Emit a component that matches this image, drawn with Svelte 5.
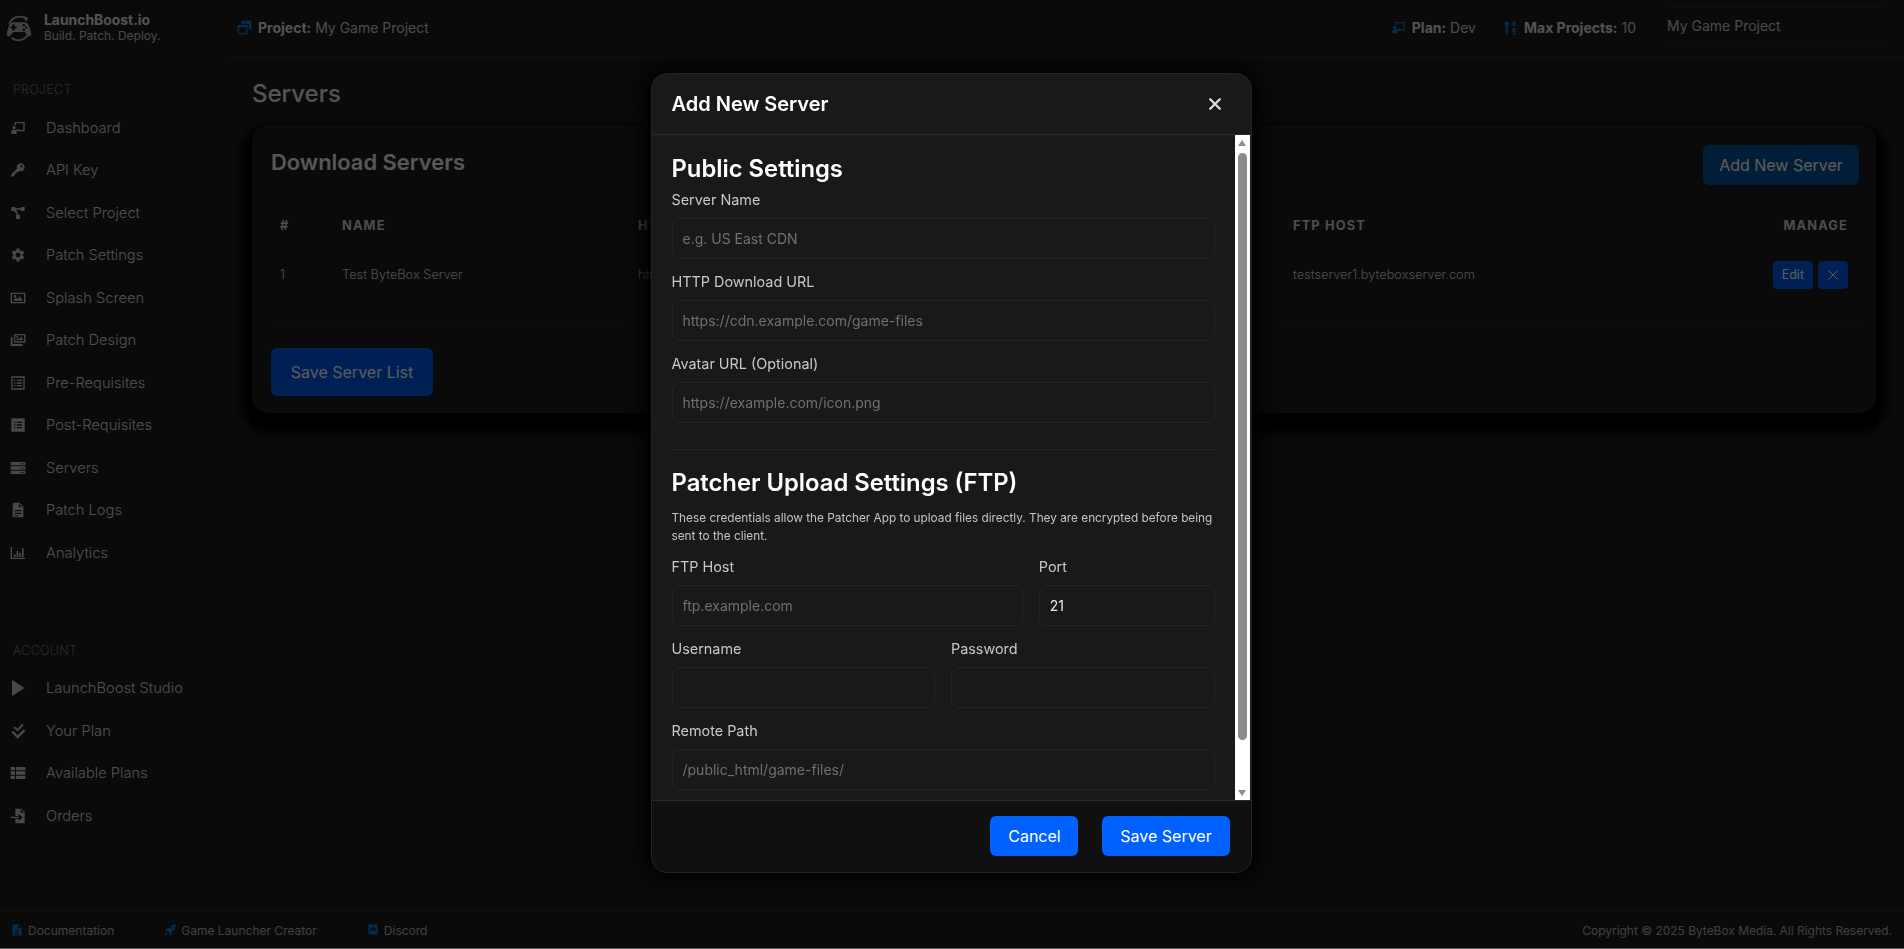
<script>
  const icons = {
    board: 'M7 3h15v14H12v-2h8V5H9v3H7zM6 9a2.6 2.6 0 1 1 0 5.200A2.6 2.6 0 0 1 6 9zM2 21v-3.500C2 16 3.200 15 4.600 15H9l4.500-2 .8 1.700L10 17v4z',
    key: 'M16 2a6 6 0 1 1-2.300 11.500l-1.700 1.700H9.500v2.500H7V20l-2 2H2v-3.500l8.400-8.400A6 6 0 0 1 16 2zm1.500 3a1.600 1.600 0 1 0 0 3.200 1.600 1.600 0 0 0 0-3.200z',
    nodes: 'M2 3h6v2h8V3h6v6h-6V7H9l4 8h2v6H9v-6h1.600L6.600 9H2z',
    gear: 'M19.140 12.940c.04-.3.06-.61.06-.94 0-.32-.02-.64-.07-.94l2.030-1.580a.49.49 0 0 0 .12-.61l-1.920-3.320a.488.488 0 0 0-.59-.22l-2.390.96c-.5-.38-1.030-.7-1.620-.94l-.36-2.540a.484.484 0 0 0-.48-.41h-3.840c-.24 0-.43.17-.47.41l-.36 2.540c-.59.24-1.130.57-1.620.94l-2.390-.96c-.22-.08-.47 0-.59.22L2.740 8.870c-.12.21-.08.47.12.61l2.030 1.580c-.05.3-.09.63-.09.94s.02.64.07.94l-2.030 1.580a.49.49 0 0 0-.12.61l1.920 3.320c.12.22.37.29.59.22l2.390-.96c.5.38 1.030.7 1.620.94l.36 2.540c.05.24.24.41.48.41h3.840c.24 0 .44-.17.47-.41l.36-2.540c.59-.24 1.130-.56 1.620-.94l2.390.96c.22.08.47 0 .59-.22l1.920-3.320c.12-.22.07-.47-.12-.61l-2.010-1.580zM12 15.600c-1.980 0-3.600-1.620-3.600-3.600s1.620-3.600 3.600-3.600 3.600 1.620 3.600 3.600-1.620 3.600-3.600 3.600z',
    image: 'M1 4h22v16H1zm2 2v12h18V6zm2 10l4-5 3 3 3-5 4 7zM7.500 7.500a2 2 0 1 1 0 4 2 2 0 0 1 0-4z',
    images: 'M6 3h17v13H6zm2 2v9h13V5zm1 7.500l3-3.500 2 2 3-4.500 3 6zM10.800 6a1.500 1.500 0 1 1 0 3 1.500 1.500 0 0 1 0-3zM1 8h3v10h15v3H1z',
    listOutline: 'M2 2h20v20H2zm2 2v16h16V4zm2 3h2v2H6zm4 0h8v2h-8zm-4 4h2v2H6zm4 0h8v2h-8zm-4 4h2v2H6zm4 0h8v2h-8z',
    listFilled: 'M2 2h20v20H2zm4 5v2h2V7zm4 0v2h8V7zm-4 4v2h2v-2zm4 0v2h8v-2zm-4 4v2h2v-2zm4 0v2h8v-2z',
    servers: 'M1 3h22v5H1zm15 2v1.500h2V5zm3 0v1.500h2V5zM1 9.500h22v5H1zm15 2V13h2v-1.500zm3 0V13h2v-1.500zM1 16h22v5H1zm15 2v1.500h2V18zm3 0v1.500h2V18z',
    file: 'M4 1h10l6 6v16H4zm9 1.500V8h5.500zM7 12v2h10v-2zm0 4v2h10v-2zm0 4v1.500h6V20z',
    chart: 'M1 3h2v16h20v2H1zm5 11h2.500v4H6zm4-5h2.500v9H10zm4 3h2.500v6H14zm4-7h2.500v13H18z',
    play: 'M3 0l19 12L3 24z',
    checks: 'M18 1l2.500 2.200-9 9.600L5 7.300l2.400-2.200 4 3.600zM20.500 9.500L23 12 11.500 23.500 2 14l2.400-2.400 7 6.800z',
    table: 'M1 3h6.500v5H1zm8 0h14v5H9zM1 9.500h6.500v5H1zm8 0h14v5H9zM1 16h6.500v5H1zm8 0h14v5H9z',
    fileIn: 'M8 1h9l5 5v17H8v-7h5v3l6-5-6-5v3H8zm8 1v5h5zM1 13h12v2H1z',
    doc: 'M3 1h12l6 6v16H3zm11 1v6h6zM7 11v2h10v-2zm2 4v2h6v-2zm-2 4v2h10v-2z',
    rocket: 'M23 1c.3 6-2.300 11-7 14l-1 6-4 2 .5-5-4.500-4.500-5 .5 2-4 6-1C13 4.300 18 1 23 1zM16 6a2 2 0 1 0 0 4 2 2 0 0 0 0-4zM5 17c-2 .5-3 2.500-3 5 2.500 0 4.500-1 5-3z',
    discord: 'M3 1h18v20l-4 2-1-2H3zm5 6c-1 .5-2 3-2 6 1 1 2 1.500 3 1.500l.8-1.500h4.400l.8 1.500c1 0 2-.5 3-1.500 0-3-1-5.500-2-6-2.500-.6-5.500-.6-8 0zm1.800 3.500a1.200 1.200 0 1 1 0 2.400 1.200 1.200 0 0 1 0-2.400zm4.400 0a1.200 1.200 0 1 1 0 2.400 1.200 1.200 0 0 1 0-2.400z',
    windows: 'M7 1h16v14h-4V6H7zM1 8h16v15H1zm2 4v9h12v-9z',
    sort: 'M6 1l5 6H7.500v16h-3V7H1zM15 2h5v8h-5zm2 2v4h1V4zM15 13h5v10h-5v-2h3v-2h-3zm2 2v2h1v-2z',
  };

  const projectNav = [
    ['board', 'Dashboard'], ['key', 'API Key'], ['nodes', 'Select Project'], ['gear', 'Patch Settings'],
    ['image', 'Splash Screen'], ['images', 'Patch Design'], ['listOutline', 'Pre-Requisites'],
    ['listFilled', 'Post-Requisites'], ['servers', 'Servers'], ['file', 'Patch Logs'], ['chart', 'Analytics'],
  ];
  const accountNav = [
    ['play', 'LaunchBoost Studio'], ['checks', 'Your Plan'], ['table', 'Available Plans'], ['fileIn', 'Orders'],
  ];
  const footerLinks = [
    ['doc', 'Documentation'], ['rocket', 'Game Launcher Creator'], ['discord', 'Discord'],
  ];
</script>

{#snippet icon(name, cls)}
  <svg class={cls} viewBox="0 0 24 24" aria-hidden="true"><path fill-rule="evenodd" d={icons[name]} /></svg>
{/snippet}

<div class="page">
  <aside class="side">
    <div class="brand">
      <svg class="logo" viewBox="0 0 32 32" aria-hidden="true">
        <path d="M4 12A13 13 0 0 1 25 5" fill="none" stroke="currentColor" stroke-width="2.200" />
        <path d="M21 1l6 2-2 6z" />
        <path d="M28 21A13 13 0 0 1 7 28" fill="none" stroke="currentColor" stroke-width="2.200" />
        <path d="M9 9h14c4 0 7 7 8 14 .4 3-3 5-5 2l-3-4H9l-3 4c-2 3-5.400 1-5-2C2 16 5 9 9 9z" />
        <path d="M8 11.500h2.500V14H13v2.500h-2.500V19H8v-2.500H5.500V14H8z" fill="#161616" />
        <circle cx="22" cy="12.500" r="1.500" fill="#161616" />
        <circle cx="25" cy="15.500" r="1.500" fill="#161616" />
        <circle cx="22" cy="18.500" r="1.500" fill="#161616" />
      </svg>
      <div>
        <div class="brand-name">LaunchBoost.io</div>
        <div class="brand-tag">Build. Patch. Deploy.</div>
      </div>
    </div>

    <div class="nav-title">PROJECT</div>
    <nav>
      {#each projectNav as [ic, label]}
        <a class="nav-item" href="#top">{@render icon(ic, 'nav-ic')}<span>{label}</span></a>
      {/each}
    </nav>

    <div class="nav-title account">ACCOUNT</div>
    <nav>
      {#each accountNav as [ic, label]}
        <a class="nav-item" href="#top">{@render icon(ic, 'nav-ic')}<span>{label}</span></a>
      {/each}
    </nav>
  </aside>

  <div class="main">
    <header class="top">
      <div class="stat">{@render icon('windows', 'blue-ic')}<b>Project:</b> My Game Project</div>
      <div class="top-right">
        <div class="stat">{@render icon('board', 'blue-ic')}<b>Plan:</b> Dev</div>
        <div class="stat">{@render icon('sort', 'blue-ic')}<b>Max Projects:</b> 10</div>
        <div class="project-select">My Game Project</div>
      </div>
    </header>

    <div class="content">
      <h1>Servers</h1>
      <section class="card">
        <div class="card-head">
          <h2>Download Servers</h2>
          <button class="btn btn-add">Add New Server</button>
        </div>
        <div class="table">
          <div class="row head">
            <div>#</div><div>NAME</div><div>HTTP URL</div><div>FTP HOST</div><div class="end">MANAGE</div>
          </div>
          <div class="row body">
            <div>1</div>
            <div>Test ByteBox Server</div>
            <div>https://testserver1.byteboxserver.com/files</div>
            <div>testserver1.byteboxserver.com</div>
            <div class="end manage">
              <button class="mini">Edit</button>
              <button class="mini" aria-label="Remove">
                <svg viewBox="0 0 10 10" width="10" height="10" aria-hidden="true"><path d="M.5.5l9 9M9.500.5l-9 9" stroke="currentColor" fill="none" /></svg>
              </button>
            </div>
          </div>
        </div>
        <button class="btn btn-save">Save Server List</button>
      </section>
    </div>
  </div>

  <footer class="foot">
    <div class="foot-links">
      {#each footerLinks as [ic, label]}
        <a href="#top">{@render icon(ic, 'foot-ic')}{label}</a>
      {/each}
    </div>
    <div class="copyright">Copyright © 2025 ByteBox Media. All Rights Reserved.</div>
  </footer>
</div>

<div class="overlay">
  <div class="modal">
    <div class="modal-head">
      <h3>Add New Server</h3>
      <button class="close" aria-label="Close">
        <svg viewBox="0 0 16 16" width="14" height="14" aria-hidden="true"><path d="M2.500 2.500l11 11M13.500 2.500l-11 11" stroke="currentColor" stroke-width="2.600" stroke-linecap="round" /></svg>
      </button>
    </div>

    <div class="modal-body">
      <div class="form">
        <h4>Public Settings</h4>
        <label for="s-name">Server Name</label>
        <input id="s-name" placeholder="e.g. US East CDN" />
        <label for="s-url">HTTP Download URL</label>
        <input id="s-url" placeholder="https://cdn.example.com/game-files" />
        <label for="s-avatar">Avatar URL (Optional)</label>
        <input id="s-avatar" placeholder="https://example.com/icon.png" />

        <hr />

        <h4>Patcher Upload Settings (FTP)</h4>
        <p>These credentials allow the Patcher App to upload files directly. They are encrypted before being sent to the client.</p>

        <div class="cols host">
          <div>
            <label for="f-host">FTP Host</label>
            <input id="f-host" placeholder="ftp.example.com" />
          </div>
          <div>
            <label for="f-port">Port</label>
            <input id="f-port" value="21" />
          </div>
        </div>
        <div class="cols">
          <div>
            <label for="f-user">Username</label>
            <input id="f-user" />
          </div>
          <div>
            <label for="f-pass">Password</label>
            <input id="f-pass" type="password" />
          </div>
        </div>
        <label for="f-path">Remote Path</label>
        <input id="f-path" placeholder="/public_html/game-files/" />
      </div>

      <div class="scrollbar">
        <span class="arrow up"></span>
        <span class="thumb"></span>
        <span class="arrow down"></span>
      </div>
    </div>

    <div class="modal-foot">
      <button class="btn btn-modal">Cancel</button>
      <button class="btn btn-modal">Save Server</button>
    </div>
  </div>
</div>

<style>
  :global(body) {
    background: #fff;
    overflow: hidden;
  }

  .page {
    height: 948px;
    display: grid;
    grid-template-columns: 228px 1fr;
    grid-template-rows: 1fr 37px;
    background: #1d1d1d;
    color: #e0e0e0;
    font-family: Inter, "Liberation Sans", sans-serif;
  }

  /* Sidebar */
  .side {
    padding-top: 14px;
  }
  .brand {
    display: flex;
    align-items: center;
    gap: 12px;
    padding-left: 6px;
    height: 27px;
    color: #b4b4b4;
  }
  .logo {
    width: 26px;
    height: 26px;
    fill: currentColor;
  }
  .brand-name {
    font-size: 13.900px;
    font-weight: 700;
    line-height: 16px;
    color: #e4e4e4;
  }
  .brand-tag {
    font-size: 12px;
    line-height: 16px;
    color: #c8c8c8;
  }
  .nav-title {
    margin: 41px 0 8.500px 13px;
    font-size: 12.500px;
    line-height: 16px;
    letter-spacing: 0.02em;
    font-weight: 300;
    color: #777;
  }
  .nav-title.account {
    margin-top: 68.500px;
  }
  .nav-item {
    display: flex;
    align-items: center;
    height: 42.500px;
    padding-left: 10px;
    gap: 20px;
    font-size: 14.700px;
    font-weight: 300;
    color: #ddd;
    text-decoration: none;
  }
  :global(.nav-ic) {
    width: 16px;
    height: 16px;
    flex: none;
    fill: #c8c8c8;
  }

  /* Top bar */
  .main {
    min-width: 0;
  }
  .top {
    height: 57px;
    box-sizing: border-box;
    display: flex;
    align-items: center;
    justify-content: space-between;
    padding: 0 20px 2px 9px;
    border-bottom: 1px solid #2c2c2c;
  }
  .top-right {
    display: flex;
    align-items: center;
  }
  .top-right .stat {
    margin-right: 27px;
  }
  .top-right .stat:nth-child(2) {
    margin-right: 31px;
  }
  .stat {
    display: flex;
    align-items: center;
    font-size: 14px;
    color: #d0d0d0;
    white-space: pre;
  }
  .stat b {
    font-weight: 700;
    color: #e4e4e4;
  }
  :global(.blue-ic) {
    width: 15px;
    height: 15px;
    margin-right: 6px;
    fill: #0a7fd6;
  }
  .project-select {
    width: 217px;
    height: 38px;
    line-height: 36px;
    font-size: 14px;
    color: #ccc;
    border-top: 1px solid #2c2c2c;
    border-bottom: 1px solid #2c2c2c;
  }

  /* Content */
  .content {
    padding: 0 28px 0 24px;
  }
  h1 {
    margin: 22px 0 17px;
    font-size: 24px;
    line-height: 30px;
    font-weight: 500;
    color: #e8e8e8;
  }
  .card {
    height: 287px;
    box-sizing: border-box;
    padding: 17.500px 17px 0 19px;
    border-top: 1px solid #2a2a2a;
    border-radius: 16px;
    background: #1d1d1d;
    box-shadow: 0 10px 10px 10px #000;
  }
  .card-head {
    display: flex;
    align-items: flex-start;
    justify-content: space-between;
    height: 58px;
  }
  h2 {
    margin: 3.500px 0 0;
    font-size: 21.900px;
    line-height: 28px;
    font-weight: 600;
    color: #f0f0f0;
  }
  .btn {
    border: none;
    border-radius: 6px;
    color: #fff;
    font-family: inherit;
    font-size: 16px;
  }
  .btn-add {
    width: 156px;
    height: 40px;
    background: #07529a;
  }
  .btn-save {
    width: 162px;
    height: 48px;
    margin-top: 21px;
    background: #0058e8;
  }
  .table {
    padding: 0 0 0 2px;
    border-bottom: 1px solid #2a2a2a;
    height: 124px;
    box-sizing: border-box;
  }
  .row {
    display: grid;
    grid-template-columns: 62px 296px 655px 1fr auto;
    padding-left: 7px;
    padding-right: 11px;
    align-items: center;
    font-size: 12.800px;
    font-weight: 300;
    color: #d8d8d8;
  }
  .row.body {
    height: 51px;
  }
  .row.head {
    height: 46.500px;
    font-weight: 700;
    letter-spacing: 0.09em;
    color: #d4d4d4;
  }
  .end {
    text-align: right;
  }
  .manage {
    display: flex;
    gap: 5px;
  }
  .mini {
    height: 28px;
    padding: 0 9px;
    min-width: 30px;
    display: flex;
    align-items: center;
    justify-content: center;
    border: none;
    border-radius: 4px;
    background: #0058e8;
    color: #fff;
    font-family: inherit;
    font-size: 12.500px;
  }

  /* Modal */
  .overlay {
    position: fixed;
    inset: 0;
    display: flex;
    justify-content: center;
    align-items: flex-start;
    padding: 73px 2px 0 0;
    background: rgba(0, 0, 0, 0.64);
    font-family: Inter, "Liberation Sans", sans-serif;
  }
  .modal {
    width: 601px;
    height: 800px;
    display: flex;
    flex-direction: column;
    overflow: hidden;
    box-sizing: border-box;
    border: 1px solid #242424;
    border-radius: 16px;
    background: #191919;
    box-shadow: 0 0 24px 8px #000;
    color: #fff;
  }
  .modal-head {
    flex: none;
    height: 60px;
    display: flex;
    align-items: center;
    justify-content: space-between;
    padding: 0 29px 0 20px;
    border-bottom: 1px solid #2a2a2a;
  }
  h3 {
    margin: 0;
    font-size: 20px;
    font-weight: 600;
  }
  .close {
    display: flex;
    padding: 0;
    border: none;
    background: none;
    color: #ddd;
  }
  .modal-body {
    flex: 1;
    min-height: 0;
    position: relative;
    overflow: hidden;
  }
  .form {
    padding: 19px 36px 0 20px;
    box-sizing: border-box;
  }
  h4 {
    margin: 0 0 6px;
    font-size: 23.800px;
    line-height: 29px;
    font-weight: 600;
  }
  label {
    display: block;
    margin-bottom: 7px;
    font-size: 14.400px;
    line-height: 22px;
    color: #c8c8c8;
  }
  input {
    display: block;
    width: 100%;
    height: 41px;
    margin-bottom: 12px;
    padding: 0 10px;
    box-sizing: border-box;
    border: 1px solid #242424;
    border-radius: 8px;
    outline: none;
    background: transparent;
    color: #e6e6e6;
    font-family: inherit;
    font-size: 14px;
  }
  input::placeholder {
    color: #707070;
  }
  hr {
    margin: 26px 0 18px;
    border: none;
    border-top: 1px solid #262626;
  }
  p {
    margin: 12px 0 11px;
    font-size: 11.800px;
    line-height: 18px;
    color: #c4c4c4;
  }
  .cols {
    display: grid;
    grid-template-columns: 1fr 1fr;
    gap: 16px;
  }
  .cols.host {
    grid-template-columns: 2fr 1fr;
  }
  .scrollbar {
    position: absolute;
    top: 0;
    right: 1px;
    bottom: 0;
    width: 15px;
    background: #fff;
  }
  .thumb {
    position: absolute;
    top: 18px;
    left: 3px;
    width: 9px;
    height: 587px;
    border-radius: 5px;
    background: #8c8c8c;
  }
  .arrow {
    position: absolute;
    left: 3px;
    width: 0;
    height: 0;
    border-left: 4.500px solid transparent;
    border-right: 4.500px solid transparent;
  }
  .arrow.up {
    top: 5px;
    border-bottom: 6px solid #8c8c8c;
  }
  .arrow.down {
    bottom: 4px;
    border-top: 6px solid #8c8c8c;
  }
  .modal-foot {
    flex: none;
    height: 72px;
    display: flex;
    justify-content: flex-end;
    align-items: flex-start;
    gap: 24px;
    padding: 15px 21px 0 0;
    box-sizing: border-box;
    border-top: 1px solid #2a2a2a;
    background: #101010;
  }
  .btn-modal {
    height: 40px;
    padding: 0 17.800px;
    background: #0061ff;
    font-size: 16px;
  }

  /* Footer */
  .foot {
    grid-column: 1 / -1;
    display: flex;
    align-items: center;
    justify-content: space-between;
    padding: 0 12px 0 11px;
    border-top: 1px solid #2a2a2a;
    font-size: 12px;
    color: #b4b4b4;
  }
  .copyright {
    font-size: 11.950px;
  }
  .foot-links {
    display: flex;
    gap: 50px;
  }
  .foot-links a {
    display: flex;
    align-items: center;
    gap: 5px;
    color: inherit;
    text-decoration: none;
  }
  :global(.foot-ic) {
    width: 12px;
    height: 12px;
    fill: #0a7fd6;
  }
</style>
